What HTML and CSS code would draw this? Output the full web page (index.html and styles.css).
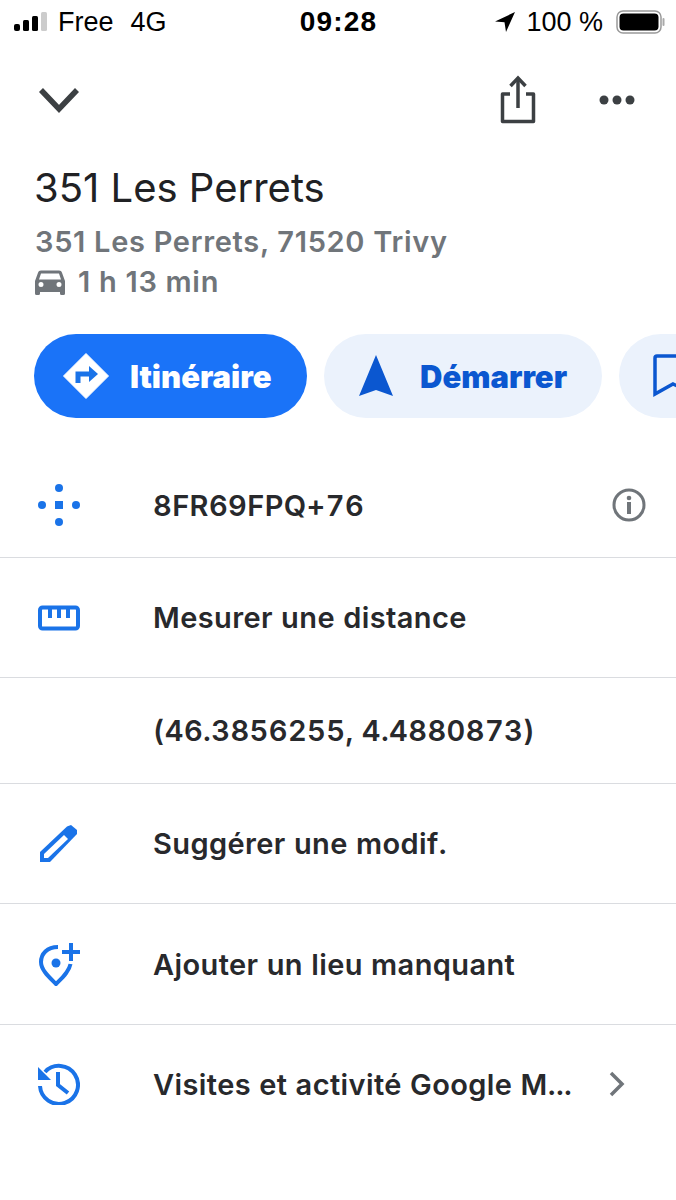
FILE: index.html
```html
<!DOCTYPE html>
<html>
  <head>
    <title>351 Les Perrets</title>
    <link rel="stylesheet" href="styles.css">
  </head>
  <body>
    <div class="status-bar">
      <div class="status-left">
        <svg class="signal" width="36" height="20" viewBox="0 0 36 20">
          <rect x="0" y="12" width="6" height="7" rx="2" fill="#000"/>
          <rect x="9" y="8" width="6" height="11" rx="1.5" fill="#000"/>
          <rect x="18" y="4" width="6" height="15" rx="1.5" fill="#000"/>
          <rect x="27" y="0" width="6" height="19" rx="1.5" fill="#ccc"/>
        </svg>
        <span>Free</span>
        <span class="network">4G</span>
      </div>
      <div class="status-time">09:28</div>
      <div class="status-right">
        <svg width="22" height="22" viewBox="0 0 22 22"><path d="M21 1 1 10.500l9.500.8L12 21z" fill="#000"/></svg>
        <span>100 %</span>
        <svg class="battery" width="50" height="24" viewBox="0 0 50 24">
          <rect x="1" y="1" width="44" height="22" rx="6" fill="#fff" stroke="#999" stroke-width="1.5"/>
          <rect x="3.500" y="3.500" width="39" height="17" rx="4" fill="#000"/>
          <rect x="46.500" y="8" width="2" height="8" rx="1" fill="#aaa"/>
        </svg>
      </div>
    </div>

    <div class="toolbar">
      <svg width="44" height="30" viewBox="0 0 44 30"><path d="M4 5 22 24 40 5" fill="none" stroke="#3c4043" stroke-width="5.500"/></svg>
      <div class="toolbar-right">
        <svg width="38" height="50" viewBox="0 0 38 50">
          <path d="M11 19H3.500v27.500h31V19H27" fill="none" stroke="#3c4043" stroke-width="3.500" stroke-linejoin="round"/>
          <path d="M19 33V5" stroke="#3c4043" stroke-width="3.500"/>
          <path d="M11.500 11 19 3l7.500 8" fill="none" stroke="#3c4043" stroke-width="3.500"/>
        </svg>
        <svg width="36" height="10" viewBox="0 0 36 10">
          <circle cx="5" cy="5" r="4.500" fill="#3c4043"/>
          <circle cx="18" cy="5" r="4.500" fill="#3c4043"/>
          <circle cx="31" cy="5" r="4.500" fill="#3c4043"/>
        </svg>
      </div>
    </div>

    <div class="place">
      <h1 class="place-title">351 Les Perrets</h1>
      <div class="place-address">351 Les Perrets, 71520 Trivy</div>
      <div class="place-time">
        <svg width="30" height="26" viewBox="0 0 30 26"><path d="M6 1.500h18c1.500 0 2.500.8 3 2.200L30 12v12.500a1.500 1.500 0 0 1-1.500 1.500h-2a1.500 1.500 0 0 1-1.500-1.500V23H5v1.500A1.500 1.500 0 0 1 3.500 26h-2A1.500 1.500 0 0 1 0 24.500V12l3-8.300C3.500 2.300 4.500 1.500 6 1.500zM6 4.500 4 10.500h22l-2-6zM6 13a2.500 2.500 0 1 0 0 5 2.500 2.500 0 0 0 0-5zm18 0a2.500 2.500 0 1 0 0 5 2.500 2.500 0 0 0 0-5z" fill="#70757a" fill-rule="evenodd"/></svg>
        <span>1 h 13 min</span>
      </div>
    </div>

    <div class="actions">
      <div class="btn btn-primary">
        <svg width="46" height="46" viewBox="0 0 46 46">
          <path d="M23 0.500 45.500 23 23 45.500.5 23z" fill="#fff" stroke="#fff" stroke-linejoin="round" stroke-width="1"/>
          <path d="M15 30V21h13" fill="none" stroke="#1a73e8" stroke-width="5"/>
          <path d="M26 13l9 8-9 8z" fill="#1a73e8"/>
        </svg>
        <span>Itinéraire</span>
      </div>
      <div class="btn btn-light btn-start">
        <svg width="34" height="42" viewBox="0 0 34 42"><path d="M17 0 34 41 17 35 0 41z" fill="#0b57d0"/></svg>
        <span>Démarrer</span>
      </div>
      <div class="btn btn-light btn-save">
        <svg width="40" height="44" viewBox="0 0 40 44"><path d="M2 4a2 2 0 0 1 2-2h34v36L20 30 2 40z" fill="none" stroke="#0b57d0" stroke-width="3.500"/></svg>
      </div>
    </div>

    <div class="list">
      <div class="row row-code">
        <svg class="row-icon" width="42" height="42" viewBox="0 0 42 42" fill="#1a73e8">
          <circle cx="21" cy="4" r="4"/><circle cx="4" cy="21" r="4"/><circle cx="38" cy="21" r="4"/><circle cx="21" cy="38" r="4"/>
          <rect x="17" y="17" width="8" height="8"/>
        </svg>
        <span class="row-text">8FR69FPQ+76</span>
        <svg class="row-end" width="34" height="34" viewBox="0 0 34 34">
          <circle cx="17" cy="17" r="15" fill="none" stroke="#70757a" stroke-width="3"/>
          <rect x="15" y="14" width="4" height="12" fill="#70757a"/>
          <circle cx="17" cy="10" r="2.300" fill="#70757a"/>
        </svg>
      </div>
      <div class="row">
        <svg class="row-icon" width="42" height="26" viewBox="0 0 42 26">
          <rect x="2" y="2.500" width="38" height="21" rx="2.500" fill="none" stroke="#1a73e8" stroke-width="4"/>
          <path d="M12 3v10M21 3v10M30 3v10" stroke="#1a73e8" stroke-width="4"/>
        </svg>
        <span class="row-text">Mesurer une distance</span>
      </div>
      <div class="row row-short">
        <span class="row-icon"></span>
        <span class="row-text">(46.3856255, 4.4880873)</span>
      </div>
      <div class="row">
        <svg class="row-icon" width="42" height="40" viewBox="0 0 42 40">
          <path d="M2 38V28L29 2.500 33 1l6 5v4L12 38z" fill="#1a73e8"/>
          <path d="M6 34v-4L26 11l4 4L10 34z" fill="#fff"/>
        </svg>
        <span class="row-text">Suggérer une modif.</span>
      </div>
      <div class="row row-tall">
        <svg class="row-icon" width="42" height="44" viewBox="0 0 42 44">
          <path d="M20 5C9 5 3 12 3 20c0 8 8 15 15 22 6-6 13-12 14.500-20" fill="none" stroke="#1a73e8" stroke-width="4"/>
          <circle cx="18" cy="21" r="4.500" fill="#1a73e8"/>
          <path d="M33 1v18M24 10h18" stroke="#1a73e8" stroke-width="4"/>
        </svg>
        <span class="row-text">Ajouter un lieu manquant</span>
      </div>
      <div class="row row-last">
        <svg class="row-icon" width="42" height="42" viewBox="0 0 42 42">
          <path d="M7 9A19 19 0 1 1 2 23" fill="none" stroke="#1a73e8" stroke-width="4"/>
          <path d="M0 4v13h13z" fill="#1a73e8"/>
          <path d="M20 9v13l10 8" fill="none" stroke="#1a73e8" stroke-width="4"/>
        </svg>
        <span class="row-text">Visites et activité Google M...</span>
        <svg class="row-end row-chevron" width="18" height="26" viewBox="0 0 18 26"><path d="M3 2 14 13 3 24" fill="none" stroke="#70757a" stroke-width="3.500"/></svg>
      </div>
    </div>
  </body>
</html>
```

FILE: styles.css
```css
html,
body {
  margin: 0;
  padding: 0;
}
body {
  width: 676px;
  height: 1200px;
  overflow: hidden;
  background-color: #fff;
  font-family: Inter, Roboto, sans-serif;
  color: #202124;
}
.status-bar {
  display: grid;
  grid-template-columns: 1fr auto 1fr;
  align-items: center;
  height: 44px;
  padding: 0 10px 0 14px;
  font-family: "Liberation Sans", Arial, sans-serif;
  font-size: 27px;
  color: #000;
}
.status-left {
  display: flex;
  align-items: center;
  gap: 8px;
}
.network {
  margin-left: 9px;
}
.status-time {
  font-weight: 700;
  font-size: 28px;
  letter-spacing: 1.2px;
  margin-left: -3px;
}
.status-right {
  display: flex;
  align-items: center;
  justify-content: flex-end;
  gap: 10px;
}
.battery {
  margin-left: 3px;
}
.toolbar {
  display: flex;
  justify-content: space-between;
  align-items: center;
  height: 112px;
  padding: 0 41px 0 37px;
}
.toolbar-right {
  display: flex;
  align-items: center;
  gap: 62px;
}
.place {
  padding: 0 35px;
  margin-top: 7px;
}
.place-title {
  margin: 0 0 0 -1px;
  font-size: 40px;
  line-height: 50px;
  font-weight: 400;
  color: #202124;
}
.place-address {
  margin-top: 9px;
  font-size: 29px;
  line-height: 40px;
  font-weight: 600;
  letter-spacing: 0.7px;
  color: #70757a;
}
.place-time {
  display: flex;
  align-items: center;
  gap: 13px;
  font-size: 29px;
  line-height: 40px;
  font-weight: 600;
  letter-spacing: 0.7px;
  color: #70757a;
}
.actions {
  display: flex;
  gap: 17px;
  padding-left: 34px;
  margin-top: 32px;
  overflow: hidden;
}
.btn {
  display: flex;
  align-items: center;
  flex-shrink: 0;
  height: 84px;
  border-radius: 42px;
  box-sizing: border-box;
  font-size: 31px;
  font-weight: 900;
}
.btn-primary {
  width: 273px;
  padding-left: 29px;
  gap: 21px;
  background-color: #1a73f8;
  color: #fff;
}
.btn-light {
  background-color: #ebf2fc;
  color: #0b57d0;
}
.btn-start {
  width: 278px;
  padding-left: 35px;
  gap: 27px;
}
.btn-save {
  width: 120px;
  padding-left: 34px;
}
.list {
  margin-top: 37px;
}
.row {
  display: flex;
  align-items: center;
  height: 120px;
  padding-left: 38px;
  border-bottom: 1px solid #dadce0;
  box-sizing: border-box;
}
.row-code {
  height: 103px;
  padding-bottom: 2px;
}
.row-short {
  height: 106px;
}
.row-tall {
  height: 121px;
}
.row-last {
  padding-bottom: 2px;
  border-bottom: none;
}
.row-icon {
  flex-shrink: 0;
  width: 42px;
  margin-right: 73px;
}
.row-text {
  font-size: 29px;
  font-weight: 600;
  letter-spacing: 0.4px;
  font-variant-numeric: tabular-nums;
  white-space: nowrap;
  color: #28292c;
}
.row-end {
  margin-left: auto;
  margin-right: 30px;
}
.row-chevron {
  margin-right: 50px;
}
```
